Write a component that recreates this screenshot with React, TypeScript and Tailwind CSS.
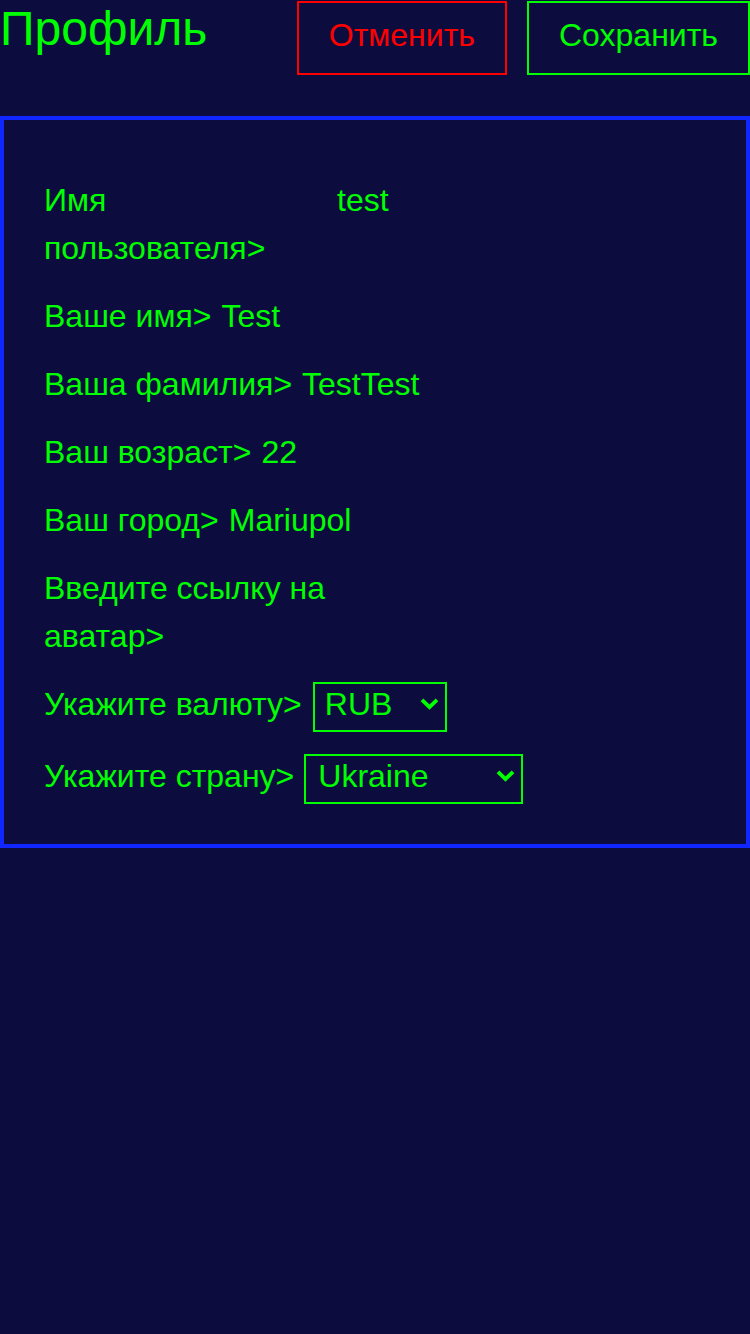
import { useState } from "react";

const fields = [
  { label: "Имя пользователя>", value: "test" },
  { label: "Ваше имя>", value: "Test" },
  { label: "Ваша фамилия>", value: "TestTest" },
  { label: "Ваш возраст>", value: "22" },
  { label: "Ваш город>", value: "Mariupol" },
  { label: "Введите ссылку на аватар>", value: "" },
];

function Chevron() {
  return (
    <svg
      className="pointer-events-none absolute top-[17px] right-[8px] h-[13px] w-[19px]"
      viewBox="0 0 19 13"
      fill="none"
      stroke="#00ff00"
      strokeWidth="3.8"
    >
      <polyline points="2,2.8 9.5,10 17,2.8" />
    </svg>
  );
}

export default function App() {
  const [values, setValues] = useState(fields.map((f) => f.value));
  const [currency, setCurrency] = useState("RUB");
  const [country, setCountry] = useState("Ukraine");

  return (
    <div className="min-h-screen bg-[#0c0c3f] font-['Liberation_Sans',Arial,sans-serif] text-[#00ff00]">
      <header className="flex h-[76px] items-start">
        <h1 className="flex-1 text-[48px] leading-[58px]">Профиль</h1>
        <div className="flex gap-5">
          <button className="mt-px h-[74px] border-2 border-[#ff0000] px-[30px] pt-[14px] pb-[20px] text-[32px] leading-9 text-[#ff0000]">
            Отменить
          </button>
          <button className="mt-px h-[74px] border-2 border-[#00ff00] px-[30px] pt-[14px] pb-[20px] text-[32px] leading-9">
            Сохранить
          </button>
        </div>
      </header>

      <form className="mt-10 flex flex-col gap-5 border-4 border-[#1028ff] px-10 pt-[56px] pb-10 text-[32px] leading-[48px]">
        {fields.map((f, i) => (
          <label key={f.label} className="flex items-start gap-[10px]">
            <span className="min-w-0">{f.label}</span>
            <input
              className="w-[369px] shrink-0 bg-transparent outline-none"
              value={values[i]}
              onChange={(e) => {
                const next = [...values];
                next[i] = e.target.value;
                setValues(next);
              }}
            />
          </label>
        ))}

        <label className="flex items-baseline gap-[11px]">
          <span>Укажите валюту&gt;</span>
          <span className="relative">
            <select
              className="h-[50px] w-[134px] appearance-none border-2 border-[#00ff00] bg-transparent pt-0 pb-[6px] pl-[10px] leading-[40px] outline-none"
              value={currency}
              onChange={(e) => setCurrency(e.target.value)}
            >
              <option value="RUB">RUB</option>
              <option value="USD">USD</option>
              <option value="EUR">EUR</option>
            </select>
            <Chevron />
          </span>
        </label>

        <label className="flex items-baseline gap-[10px]">
          <span>Укажите страну&gt;</span>
          <span className="relative">
            <select
              className="h-[50px] w-[219px] appearance-none border-2 border-[#00ff00] bg-transparent pt-0 pb-[6px] pl-[12px] leading-[40px] outline-none"
              value={country}
              onChange={(e) => setCountry(e.target.value)}
            >
              <option value="Ukraine">Ukraine</option>
              <option value="Russia">Russia</option>
              <option value="Belarus">Belarus</option>
            </select>
            <Chevron />
          </span>
        </label>
      </form>
    </div>
  );
}
